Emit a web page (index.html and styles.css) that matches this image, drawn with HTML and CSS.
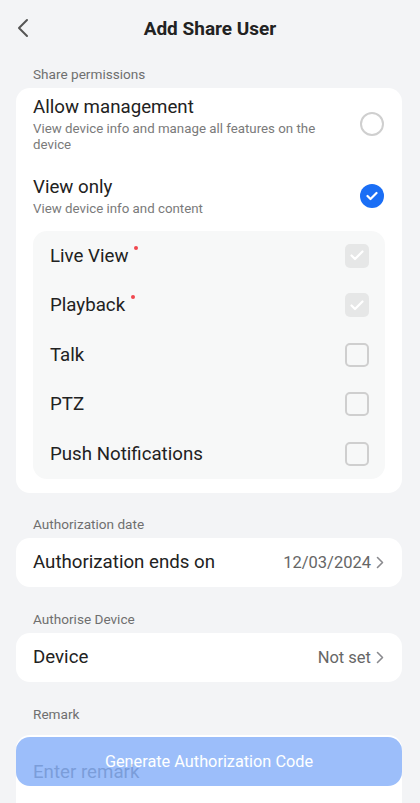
FILE: index.html
```html
<!DOCTYPE html>
<html lang="en">
<head>
  <meta charset="UTF-8">
  <title>Add Share User</title>
  <link rel="stylesheet" href="styles.css">
</head>
<body>

  <header class="top-bar">
    <button class="back-btn" aria-label="Back">
      <svg width="14" height="20" viewBox="0 0 14 20"><path d="M10 2 L2 10 L10 18" fill="none" stroke="#555" stroke-width="2" stroke-linecap="round" stroke-linejoin="round"/></svg>
    </button>
    <h1>Add Share User</h1>
  </header>

  <main class="page">
    <div class="section-label first">Share permissions</div>
    <div class="card perms">
      <div class="option">
        <div class="option-text">
          <div class="option-title">Allow management</div>
          <div class="option-sub">View device info and manage all features on the device</div>
        </div>
        <span class="radio"></span>
      </div>

      <div class="option second">
        <div class="option-text">
          <div class="option-title">View only</div>
          <div class="option-sub">View device info and content</div>
        </div>
        <span class="radio checked">
          <svg width="12" height="10" viewBox="0 0 12 10"><path d="M1.5 5 L4.5 8 L10.5 2" fill="none" stroke="#fff" stroke-width="2.2" stroke-linecap="round" stroke-linejoin="round"/></svg>
        </span>
      </div>

      <div class="feature-box">
        <div class="feature">
          <span class="feature-name">Live View<i class="dot"></i></span>
          <span class="check disabled">
            <svg width="14" height="11" viewBox="0 0 14 11"><path d="M1.5 5.5 L5 9 L12.5 1.5" fill="none" stroke="#fff" stroke-width="2.2" stroke-linecap="round" stroke-linejoin="round"/></svg>
          </span>
        </div>
        <div class="feature">
          <span class="feature-name">Playback<i class="dot"></i></span>
          <span class="check disabled">
            <svg width="14" height="11" viewBox="0 0 14 11"><path d="M1.5 5.5 L5 9 L12.5 1.5" fill="none" stroke="#fff" stroke-width="2.2" stroke-linecap="round" stroke-linejoin="round"/></svg>
          </span>
        </div>
        <div class="feature">
          <span class="feature-name">Talk</span>
          <span class="check"></span>
        </div>
        <div class="feature">
          <span class="feature-name">PTZ</span>
          <span class="check"></span>
        </div>
        <div class="feature">
          <span class="feature-name">Push Notifications</span>
          <span class="check"></span>
        </div>
      </div>
    </div>

    <div class="section-label">Authorization date</div>
    <div class="card row">
      <span class="row-title">Authorization ends on</span>
      <span class="row-value">12/03/2024
        <svg class="chev" width="8" height="13" viewBox="0 0 8 13"><path d="M1.5 1.5 L6.5 6.5 L1.5 11.5" fill="none" stroke="#8a8a8e" stroke-width="1.6" stroke-linecap="round" stroke-linejoin="round"/></svg>
      </span>
    </div>

    <div class="section-label">Authorise Device</div>
    <div class="card row">
      <span class="row-title">Device</span>
      <span class="row-value">Not set
        <svg class="chev" width="8" height="13" viewBox="0 0 8 13"><path d="M1.5 1.5 L6.5 6.5 L1.5 11.5" fill="none" stroke="#8a8a8e" stroke-width="1.6" stroke-linecap="round" stroke-linejoin="round"/></svg>
      </span>
    </div>

    <div class="section-label remark-label">Remark</div>
    <div class="card remark">
      <div class="placeholder">Enter remark</div>
    </div>
  </main>

  <button class="generate-btn">Generate Authorization Code</button>

</body>
</html>
```

FILE: styles.css
```css
body {
  margin: 0;
  font-family: Roboto, 'Noto Sans', sans-serif;
  background: #f3f4f6;
  color: #222;
}

.top-bar {
  height: 56px;
  display: flex;
  align-items: center;
  justify-content: center;
  position: relative;
}

.top-bar h1 {
  margin: 0;
  font-size: 19px;
  font-weight: 700;
  color: #222;
}

.back-btn {
  position: absolute;
  left: 14px;
  top: 18px;
  background: none;
  border: none;
  padding: 0;
  width: 20px;
  height: 20px;
  display: flex;
  align-items: center;
  justify-content: center;
}

.page {
  padding: 0 18px 120px 16px;
}

.section-label {
  font-size: 13.6px;
  line-height: 16px;
  color: #6f6f6f;
  padding-left: 17px;
  margin: 23px 0 6px;
}

.section-label.first {
  margin-top: 10px;
}

.section-label.remark-label {
  margin: 25px 0 13px;
}

.card {
  background: #fff;
  border-radius: 14px;
}

.card.row + .section-label {
  margin-top: 24px;
}

.perms {
  padding: 7px 17px 14px;
}

.option {
  display: flex;
  align-items: center;
}

.option.second {
  margin-top: 22px;
}

.option-text {
  flex: 1;
  margin-right: 22px;
}

.option-title {
  font-size: 18.7px;
  line-height: 24px;
  color: #222;
}

.option-sub {
  margin-top: 2px;
  font-size: 13.3px;
  line-height: 16px;
  color: #7a7a7a;
}

.radio {
  width: 24px;
  height: 24px;
  box-sizing: border-box;
  border-radius: 50%;
  border: 2px solid #cfcfcf;
  display: flex;
  align-items: center;
  justify-content: center;
  margin-right: 1px;
}

.radio.checked {
  border: none;
  background: #1a6ef5;
}

.feature-box {
  margin-top: 14px;
  background: #f7f8f8;
  border-radius: 14px;
  padding: 0 16px 0 17px;
}

.feature {
  height: 49.5px;
  display: flex;
  align-items: center;
  justify-content: space-between;
}

.feature-name {
  font-size: 18.7px;
  color: #222;
}

.dot {
  display: inline-block;
  width: 4px;
  height: 4px;
  border-radius: 50%;
  background: #f0474f;
  vertical-align: top;
  margin: 1px 0 0 6px;
}

.check {
  width: 24px;
  height: 24px;
  box-sizing: border-box;
  border: 2px solid #cfcfcf;
  border-radius: 5px;
  display: flex;
  align-items: center;
  justify-content: center;
}

.check.disabled {
  border: none;
  background: #e6e7e7;
}

.row {
  height: 49px;
  display: flex;
  align-items: center;
  justify-content: space-between;
  padding: 0 18px 0 17px;
}

.row-title {
  font-size: 18.7px;
  color: #222;
}

.row-value {
  font-size: 16.5px;
  color: #666;
  display: flex;
  align-items: center;
}

.chev {
  margin-left: 5px;
}

.remark {
  height: 120px;
  padding: 26px 17px 0;
  box-sizing: border-box;
}

.placeholder {
  font-size: 18.7px;
  color: #bdbdbd;
}

.generate-btn {
  position: fixed;
  left: 16px;
  right: 18px;
  bottom: 17px;
  height: 49px;
  border: none;
  border-radius: 14px;
  background: #3b7ff5;
  opacity: 0.5;
  color: #fff;
  font-family: Roboto, 'Noto Sans', sans-serif;
  font-size: 16.3px;
}
```
